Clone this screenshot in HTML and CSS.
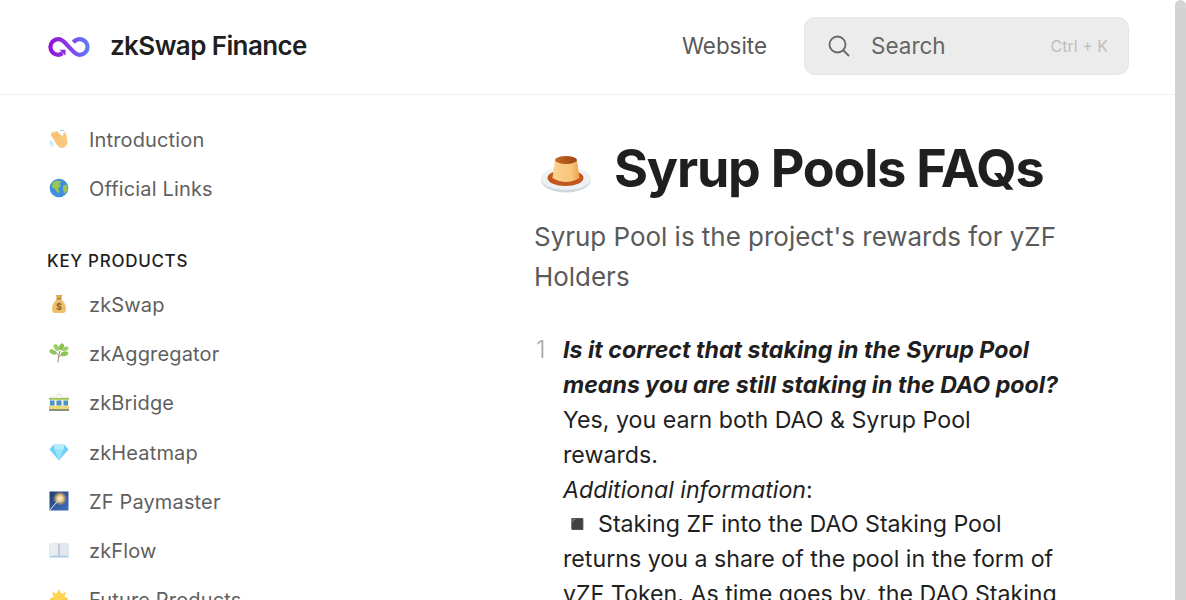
FILE: index.html
```html
<!DOCTYPE html>
<html lang="en">
<head>
  <meta charset="UTF-8" />
  <title>Syrup Pools FAQs - zkSwap Finance</title>
  <link rel="stylesheet" href="styles.css">
</head>
<body>
  <div class="page">
    <header class="topbar">
      <a class="brand">
        <svg class="brand-logo" viewBox="0 0 42 20" width="42" height="20">
          <defs>
            <linearGradient id="logoGrad" gradientUnits="userSpaceOnUse" x1="0" x2="42" y1="0" y2="0">
              <stop offset="0" stop-color="#9410d8" />
              <stop offset="0.45" stop-color="#8a34e6" />
              <stop offset="1" stop-color="#5a82fa" />
            </linearGradient>
          </defs>
          <path d="M14.500 16.300C13.200 17.200 12 17.800 10.200 17.800C5.900 17.800 2.400 14.300 2.400 10C2.400 5.700 5.900 2.200 10.200 2.200C15 2.200 17 6 21 10C25 14 27 17.800 31.800 17.800C36.100 17.800 39.600 14.300 39.600 10C39.600 5.700 36.100 2.200 31.800 2.200C29 2.200 27 3.500 25.300 5.200" fill="none" stroke="url(#logoGrad)" stroke-width="4.200" />
          <path d="M11.500 12.800h6v6z" fill="#8f22de" />
        </svg>
        <span class="brand-name">zkSwap Finance</span>
      </a>
      <nav class="topnav">
        <a class="topnav-link">Website</a>
        <div class="search">
          <svg class="search-icon" viewBox="0 0 24 24" width="24" height="24">
            <circle cx="10.500" cy="10.500" r="8" fill="none" stroke="#666" stroke-width="1.800" />
            <path d="M16.500 16.500L22 22" stroke="#666" stroke-width="1.800" fill="none" />
          </svg>
          <span class="search-text">Search</span>
          <span class="search-key">Ctrl + K</span>
        </div>
      </nav>
    </header>

    <div class="layout">
      <aside class="sidebar">
        <ul class="side-list">
          <li class="side-item">
            <svg class="side-icon" viewBox="0 0 20 20">
              <path d="M1.500 5.500L4 2.500L6 4L6.500 1.500L9.500 3.500L13.500 7.500L14.500 4L16.500 3.500L17.500 7L18.500 13Q18 17.500 14.500 19Q10.500 19.500 7.500 15.500Z" fill="#fbc77e" />
              <path d="M3 5.500L8 10M5 3.500L10 8.500M7 2.500L11.500 7" stroke="#eeb05f" stroke-width="0.700" fill="none" />
              <path d="M11 1.500Q14 .5 15.500 2M1 13.500Q1.500 16 4 17.500M1.500 11.500Q2 14 4.500 15.500" stroke="#8dd6ea" stroke-width="1" fill="none" />
            </svg>
            Introduction
          </li>
          <li class="side-item">
            <svg class="side-icon" viewBox="0 0 20 20">
              <circle cx="10" cy="10" r="9.300" fill="#3f8fde" />
              <path d="M5 3.500Q9 1.500 12 3.500L10.500 6L12 7.500L9 10.500L10.500 13L9 15.500L6.500 11.500L3 9Q2.500 6 5 3.500Z" fill="#9cc653" />
              <path d="M14 8L18 6.500Q19.500 10 17.500 14L15 15.500L14 11.500Z" fill="#9cc653" />
            </svg>
            Official Links
          </li>
        </ul>
        <h4 class="side-title">KEY PRODUCTS</h4>
        <ul class="side-list">
          <li class="side-item">
            <svg class="side-icon" viewBox="0 0 20 20">
              <path d="M6.500 1L13.500 1L12 4.500L8 4.500Z" fill="#dca852" />
              <path d="M8 5L12 5Q17.500 10 17 16Q16.500 19 14 19L6 19Q3.500 19 3 16Q2.500 10 8 5Z" fill="#edc06f" />
              <rect x="7.500" y="4" width="5" height="1.500" fill="#b98636" />
              <text class="side-icon-text" x="10" y="15.500">$</text>
            </svg>
            zkSwap
          </li>
          <li class="side-item">
            <svg class="side-icon" viewBox="0 0 20 20">
              <path d="M9 19.500Q9 13 11 8M9.300 14L15 10.500M9.500 12L5 8" stroke="#9b8a68" stroke-width="1" fill="none" />
              <ellipse cx="4" cy="9" rx="3.800" ry="2.300" fill="#8dc55a" transform="rotate(25 4 9)" />
              <ellipse cx="7.500" cy="4.500" rx="3.800" ry="2.300" fill="#9ccf66" transform="rotate(50 7.500 4.500)" />
              <ellipse cx="12.500" cy="3.800" rx="3.500" ry="2.200" fill="#86c052" transform="rotate(-70 12.500 3.800)" />
              <ellipse cx="16" cy="5.800" rx="3.500" ry="2" fill="#9ccf66" transform="rotate(-15 16 5.800)" />
              <ellipse cx="15.500" cy="10.800" rx="3.900" ry="2.300" fill="#8dc55a" transform="rotate(-15 15.500 10.800)" />
            </svg>
            zkAggregator
          </li>
          <li class="side-item">
            <svg class="side-icon" viewBox="0 0 20 20">
              <path d="M7 4.500L10 1.200L13 4.500" stroke="#c8c8c8" stroke-width="0.800" fill="none" />
              <rect x="0" y="4.500" width="20" height="14.500" rx="1" fill="#eef0ea" />
              <rect x="0" y="6" width="20" height="1.700" fill="#9cc44c" />
              <rect x="1" y="8.500" width="4.500" height="5" fill="#4f93bd" />
              <rect x="7.500" y="8.500" width="5" height="5" fill="#4f93bd" />
              <rect x="14.500" y="8.500" width="4.500" height="5" fill="#4f93bd" />
              <rect x="0" y="14" width="20" height="3" fill="#efd970" />
              <rect x="0" y="17" width="20" height="2" fill="#8b8f7d" />
            </svg>
            zkBridge
          </li>
          <li class="side-item">
            <svg class="side-icon" viewBox="0 0 20 20">
              <path d="M4.500 2.500L15.500 2.500L19.500 7.500L10 18.500L.5 7.500Z" fill="#6fd0f6" />
              <path d="M5.500 7.500L14.500 7.500L10 18.500Z" fill="#9be3fb" />
              <path d="M4.500 2.500L15.500 2.500L14.500 7.500L5.500 7.500Z" fill="#b5ecfd" />
            </svg>
            zkHeatmap
          </li>
          <li class="side-item">
            <svg class="side-icon" viewBox="0 0 20 20">
              <defs>
                <linearGradient id="skyGrad" x1="0" x2="1" y1="0" y2="1">
                  <stop offset="0" stop-color="#243c68" />
                  <stop offset="1" stop-color="#4270c8" />
                </linearGradient>
                <radialGradient id="sparkGrad">
                  <stop offset="0" stop-color="#fffbe0" />
                  <stop offset="0.45" stop-color="#e8c77c" />
                  <stop offset="1" stop-color="#e8b060" stop-opacity="0" />
                </radialGradient>
              </defs>
              <rect x="0.500" y="0.500" width="19" height="19" fill="url(#skyGrad)" />
              <circle cx="11" cy="7.500" r="7" fill="url(#sparkGrad)" />
              <path d="M1 19L10 8.500" stroke="#dfe8f5" stroke-width="1" />
            </svg>
            ZF Paymaster
          </li>
          <li class="side-item">
            <svg class="side-icon" viewBox="0 0 20 20">
              <rect x="0.500" y="3.500" width="19" height="14" rx="0.500" fill="#a9cfe6" />
              <path d="M1 3Q6 2 9.500 3.500L9.500 16Q6 15 1 16Z" fill="#e6edf4" />
              <path d="M19 3Q14 2 10.500 3.500L10.500 16Q14 15 19 16Z" fill="#dfe8f1" />
              <rect x="9.500" y="3.500" width="1" height="13" fill="#d9a9b0" />
            </svg>
            zkFlow
          </li>
          <li class="side-item">
            <svg class="side-icon" viewBox="0 0 20 20">
              <circle cx="10" cy="10" r="6.500" fill="#fdd54f" />
              <path d="M10 0L11.500 4L8.500 4ZM3 3L6.500 4.500L4.500 6.500ZM17 3L15.500 6.500L13.500 4.500ZM0 10L4 8.500L4 11.500ZM20 10L16 8.500L16 11.500Z" fill="#fdc93a" />
            </svg>
            Future Products
          </li>
        </ul>
      </aside>

      <main class="content">
        <h1 class="doc-title">
          <svg class="doc-icon" viewBox="0 0 60 60" width="60" height="60">
            <defs>
              <linearGradient id="flanGrad" x1="0" x2="1" y1="0" y2="0">
                <stop offset="0" stop-color="#fbd38f" />
                <stop offset="0.7" stop-color="#f9c57a" />
                <stop offset="1" stop-color="#eda24e" />
              </linearGradient>
              <linearGradient id="topGrad" x1="0" x2="1" y1="0" y2="0">
                <stop offset="0" stop-color="#c76a22" />
                <stop offset="1" stop-color="#9e4416" />
              </linearGradient>
            </defs>
            <ellipse cx="32" cy="41" rx="25" ry="12.500" fill="#ced6da" />
            <ellipse cx="32" cy="39.500" rx="25" ry="11.500" fill="#eef1f3" />
            <ellipse cx="31.500" cy="39" rx="18" ry="8" fill="#c2561c" />
            <path d="M21 21L18.500 39Q32 47 45.500 39L43 21Z" fill="url(#flanGrad)" />
            <ellipse cx="32" cy="21" rx="11" ry="4" fill="url(#topGrad)" />
          </svg>
          <span>Syrup Pools FAQs</span>
        </h1>
        <p class="doc-lead">Syrup Pool is the project's rewards for yZF Holders</p>
        <div class="faq">
          <span class="faq-num">1</span>
          <div class="faq-body">
            <strong><em>Is it correct that staking in the Syrup Pool means you are still staking in the DAO pool?</em></strong><br>
            Yes, you earn both DAO &amp; Syrup Pool rewards.<br>
            <em>Additional information</em>:<br>
            <span class="faq-bullet">◾</span>Staking ZF into the DAO Staking Pool returns you a share of the pool in the form of yZF Token. As time goes by, the DAO Staking Pool grows.
          </div>
        </div>
      </main>
    </div>
  </div>
  <div class="scrollbar"><div class="scrollbar-thumb"></div></div>
</body>
</html>
```

FILE: styles.css
```css
html, body {
  height: 100%;
}
body {
  margin: 0;
  display: flex;
  overflow: hidden;
  background: #fff;
  color: #1f1f1f;
  font-family: Inter, "Noto Color Emoji", sans-serif;
}
.page {
  flex: 1;
  min-width: 0;
  height: 600px;
  overflow: hidden;
}
.scrollbar {
  width: 11px;
  background: #fff;
}
.scrollbar-thumb {
  height: 100%;
  background: #d3d3d3;
  border-radius: 6px 6px 0 0;
}

.topbar {
  display: flex;
  align-items: center;
  justify-content: space-between;
  box-sizing: border-box;
  height: 95px;
  padding: 0 46px 2px 48px;
  border-bottom: 1px solid #f0f0f0;
}
.brand {
  display: flex;
  align-items: center;
  gap: 20px;
}
.brand-logo {
  display: block;
  margin-top: 1px;
}
.brand-name {
  margin-bottom: 2px;
  font-size: 26px;
  font-weight: 600;
  letter-spacing: -0.6px;
}
.topnav {
  display: flex;
  align-items: center;
  gap: 37px;
}
.topnav-link {
  margin-bottom: 2px;
  font-size: 22.400px;
  color: #595959;
}
.search {
  display: flex;
  align-items: center;
  box-sizing: border-box;
  width: 325px;
  height: 58px;
  padding: 0 20px 0 22px;
  background: #ececec;
  border: 1px solid #e4e4e4;
  border-radius: 11px;
}
.search-icon {
  flex: none;
}
.search-text {
  flex: 1;
  margin: 0 0 2px 20px;
  font-size: 22.500px;
  color: #666;
}
.search-key {
  font-size: 16px;
  color: #bdbdbd;
}

.layout {
  display: flex;
}
.sidebar {
  box-sizing: border-box;
  width: 486px;
  flex: none;
  padding: 20px 0 0 47px;
}
.side-list {
  list-style: none;
  margin: 0;
  padding: 0;
}
.side-item {
  display: flex;
  align-items: center;
  height: 49.200px;
  font-size: 20px;
  letter-spacing: 0.15px;
  color: #5f5f5f;
}
.side-icon {
  flex: none;
  width: 20px;
  height: 20px;
  margin: -2px 20px 0 2px;
}
.side-icon-text {
  font-size: 9px;
  font-weight: 700;
  letter-spacing: 0;
  fill: #8a6326;
  text-anchor: middle;
}
.side-title {
  margin: 38px 0 0;
  height: 29px;
  font-size: 17px;
  font-weight: 500;
  letter-spacing: 0.7px;
  color: #1f1f1f;
}

.content {
  flex: 1;
  min-width: 0;
  padding: 0 0 0 48px;
}
.doc-title {
  display: flex;
  align-items: center;
  margin: 42px 0 0;
  font-size: 52px;
  font-weight: 700;
  line-height: 64px;
  letter-spacing: -1.2px;
}
.doc-icon {
  flex: none;
  margin-right: 20px;
}
.doc-lead {
  width: 530px;
  margin: 16px 0 0;
  font-size: 25.950px;
  line-height: 40.200px;
  color: #5a5a5a;
}
.faq {
  display: flex;
  width: 530px;
  margin-top: 36px;
  font-size: 23.200px;
  line-height: 34.800px;
}
.faq-num {
  box-sizing: border-box;
  width: 29px;
  flex: none;
  padding-left: 2px;
  font-size: 24px;
  font-weight: 300;
  color: #a8a8a8;
}
.faq-body strong {
  font-weight: 700;
}
.faq-bullet {
  display: inline-block;
  width: 35px;
}
```
